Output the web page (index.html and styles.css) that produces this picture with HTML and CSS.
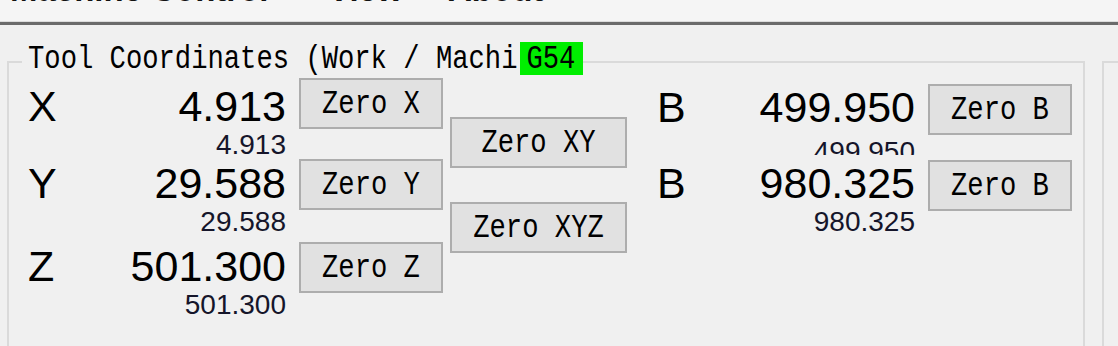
FILE: index.html
```html
<!DOCTYPE html>
<html lang="en">
<head>
<meta charset="utf-8">
<title>Tool Coordinates</title>
<link rel="stylesheet" href="styles.css">
</head>
<body>
<div class="menubar">
  <span class="menu-item">Machine Control</span>
  <span class="menu-item">View</span>
  <span class="menu-item">About</span>
</div>
<div class="main">
  <section class="group group-coords">
    <div class="group-title">
      <span class="mono">Tool Coordinates (Work / Machi</span>
      <span class="wcs"><span class="mono">G54</span></span>
    </div>
    <div class="coords">
      <div class="axes axes-main">
        <div class="axis axis-x">
          <span class="axis-label">X</span>
          <div class="vals"><span class="big">4.913</span><span class="small">4.913</span></div>
        </div>
        <div class="axis axis-y">
          <span class="axis-label">Y</span>
          <div class="vals"><span class="big">29.588</span><span class="small">29.588</span></div>
        </div>
        <div class="axis axis-z">
          <span class="axis-label">Z</span>
          <div class="vals"><span class="big">501.300</span><span class="small">501.300</span></div>
        </div>
      </div>
      <div class="btn-col btn-col-main">
        <button class="btn btn-x"><span class="mono">Zero X</span></button>
        <button class="btn btn-y"><span class="mono">Zero Y</span></button>
        <button class="btn btn-z"><span class="mono">Zero Z</span></button>
      </div>
      <div class="btn-col btn-col-multi">
        <button class="btn btn-xy"><span class="mono">Zero XY</span></button>
        <button class="btn btn-xyz"><span class="mono">Zero XYZ</span></button>
      </div>
      <div class="axes axes-side">
        <div class="axis axis-b1">
          <span class="axis-label">B</span>
          <div class="vals"><span class="big">499.950</span><span class="small">499.950</span></div>
        </div>
        <div class="axis axis-b2">
          <span class="axis-label">B</span>
          <div class="vals"><span class="big">980.325</span><span class="small">980.325</span></div>
        </div>
      </div>
      <div class="btn-col btn-col-side">
        <button class="btn btn-b1"><span class="mono">Zero B</span></button>
        <button class="btn btn-b2"><span class="mono">Zero B</span></button>
      </div>
    </div>
  </section>
  <section class="group group-side"></section>
</div>
</body>
</html>
```
FILE: styles.css
```css
* { box-sizing: border-box; }
html, body { margin: 0; padding: 0; }
body {
  width: 1118px;
  height: 346px;
  overflow: hidden;
  background: #f0f0f0;
  font-family: "Liberation Sans", Arial, sans-serif;
  color: #000;
}

/* Menu bar (scrolled off the top) */
.menubar {
  height: 25px;
  background: #f5f5f5;
  border-bottom: 3px solid #6b6b6b;
  box-shadow: 0 -1px 0 #dcdcdc inset;
  overflow: hidden;
  display: grid;
  grid-template-columns: 318px 120px auto;
  padding-left: 10px;
}
.menu-item {
  font-weight: 700;
  font-size: 33px;
  line-height: 32px;
  margin-top: -26px;
  color: #111;
  white-space: nowrap;
}

/* Group boxes */
.main {
  display: flex;
  height: 321px;
  padding: 36px 0 0 7px;
}
.group {
  border: 2px solid #dadada;
  border-bottom: none;
  height: 100%;
}
.group-coords { width: 1078px; flex: none; }
.group-side { flex: 1; margin-left: 17px; border-right: none; }

.group-title {
  display: flex;
  align-items: center;
  width: max-content;
  height: 33px;
  margin: -21px 0 0 13px;
  padding-left: 6px;
  background: #f0f0f0;
}
.mono {
  display: inline-block;
  font-family: "Liberation Mono", "Courier New", monospace;
  font-weight: 400;
  font-size: 27.2px;
  line-height: 33px;
  white-space: pre;
  transform: scaleY(1.25);
  color: #000;
}
.wcs {
  display: flex;
  align-items: center;
  height: 33px;
  margin-left: 3px;
  padding: 0 8px 0 6px;
  background: #00ee00;
}

/* Coordinates */
.coords {
  display: flex;
  align-items: flex-start;
  padding-left: 19px;
}
.axes {
  width: 258px;
  flex: none;
  display: flex;
  flex-direction: column;
}
.axes-main { padding-top: 9px; }
.axes-side { margin-left: 30px; padding-top: 10px; }

.axis { display: flex; align-items: flex-start; }
.axis-label {
  flex: 1;
  font-size: 43px;
  line-height: 44px;
}
.vals {
  display: flex;
  flex-direction: column;
  align-items: flex-end;
}
.big {
  font-size: 43px;
  line-height: 44px;
}
.small {
  font-size: 28px;
  line-height: 28px;
  margin-top: 3px;
  color: #15152a;
}
.axis-y { margin-top: 2px; }
.axis-z { margin-top: 8px; }
.axis-b1 .small { margin-top: 9px; height: 17px; overflow: hidden; }
.axis-b2 { margin-top: 6px; }

/* Buttons */
.btn-col {
  display: flex;
  flex-direction: column;
  flex: none;
  width: 144px;
  margin-left: 13px;
}
.btn-col-main { padding-top: 3px; }
.btn-col-multi { width: 177px; margin-left: 7px; padding-top: 42px; }
.btn-col-side { padding-top: 9px; }

.btn {
  height: 51px;
  margin: 0;
  padding: 0;
  border: 2px solid #adadad;
  border-radius: 0;
  background: #e1e1e1;
  display: flex;
  align-items: center;
  justify-content: center;
}
.btn-y { margin-top: 30px; }
.btn-z { margin-top: 32px; }
.btn-xyz { margin-top: 34px; }
.btn-b2 { margin-top: 25px; }
```
